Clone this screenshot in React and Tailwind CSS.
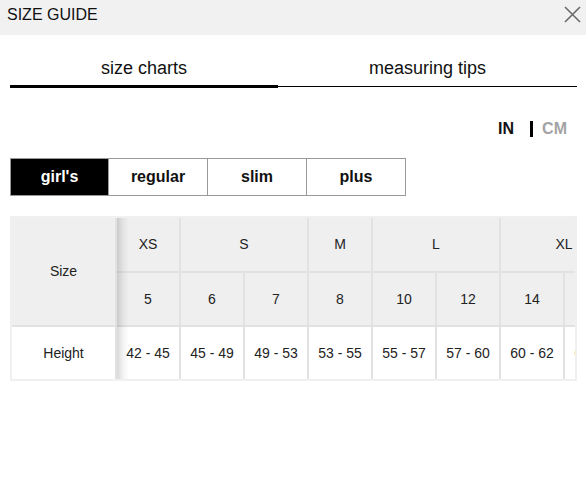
import React from "react";

const font = { fontFamily: '"Liberation Sans", Arial, sans-serif' };

function Cell({ className = "", children }) {
  return (
    <div className={`flex items-center justify-center text-[14px] text-[#222] ${className}`}>
      {children}
    </div>
  );
}

export default function App() {
  const sizes = ["5", "6", "7", "8", "10", "12", "14", "16"];
  const heights = ["42 - 45", "45 - 49", "49 - 53", "53 - 55", "55 - 57", "57 - 60", "60 - 62", "62 - 64"];
  return (
    <div className="w-[586px] h-[500px] bg-white" style={font}>
      <div className="h-[35px] bg-[#f1f1f1] flex items-start justify-between pl-[7px] pr-[5px] pt-[5px]">
        <span className="text-[16px] leading-[18px] text-[#111] mt-[1px]">SIZE GUIDE</span>
        <svg width="17" height="17" viewBox="0 0 17 17" className="mt-[1px]">
          <path d="M1 1L16 16M16 1L1 16" stroke="#6b6b6b" strokeWidth="1.6" fill="none" />
        </svg>
      </div>

      <div className="pl-[10px] pr-[9px]">
        <div className="mt-[16px] flex border-b border-black">
          <div className="flex-auto h-[37px] -mb-[2px] border-b-[3px] border-black flex items-center justify-center text-[18px] text-[#111]">
            size charts
          </div>
          <div className="flex-auto h-[35px] flex items-center justify-center text-[18px] text-[#111]">
            measuring tips
          </div>
        </div>

        <div className="mt-[32px] h-[20px] flex items-center justify-end pr-[10px] text-[16px] font-bold">
          <span className="text-[#111]">IN</span>
          <div className="ml-[16px] mr-[9px] w-[3px] h-[16px] bg-black" />
          <span className="text-[#a3a3a3]">CM</span>
        </div>

        <div className="mt-[19px] flex">
          <div className="w-[99px] h-[38px] border border-[#999] bg-black text-white font-bold text-[16px] flex items-center justify-center">
            girl's
          </div>
          <div className="w-[100px] h-[38px] -ml-px border border-[#999] text-[#111] font-bold text-[16px] flex items-center justify-center">
            regular
          </div>
          <div className="w-[100px] h-[38px] -ml-px border border-[#999] text-[#111] font-bold text-[16px] flex items-center justify-center">
            slim
          </div>
          <div className="w-[100px] h-[38px] -ml-px border border-[#999] text-[#111] font-bold text-[16px] flex items-center justify-center">
            plus
          </div>
        </div>

        <div className="mt-[20px] border-2 border-[#f0f0f0] overflow-hidden relative">
          <div className="grid grid-cols-[103px_repeat(8,62px)] grid-rows-[53px_52px_52px] gap-[2px] bg-[#e2e2e2] w-max">
            <Cell className="row-span-2 bg-[#efefef]">Size</Cell>
            <Cell className="bg-[#efefef]">XS</Cell>
            <Cell className="col-span-2 bg-[#efefef]">S</Cell>
            <Cell className="bg-[#efefef]">M</Cell>
            <Cell className="col-span-2 bg-[#efefef]">L</Cell>
            <Cell className="col-span-2 bg-[#efefef]">XL</Cell>
            {sizes.map((s) => (
              <Cell key={s} className="bg-[#efefef]">{s}</Cell>
            ))}
            <Cell className="bg-white">Height</Cell>
            {heights.map((h) => (
              <Cell key={h} className="bg-white">{h}</Cell>
            ))}
          </div>
          <div className="absolute top-0 bottom-0 left-[105px] w-[12px] bg-gradient-to-r from-black/15 via-black/5 to-transparent" />
        </div>
      </div>
    </div>
  );
}
